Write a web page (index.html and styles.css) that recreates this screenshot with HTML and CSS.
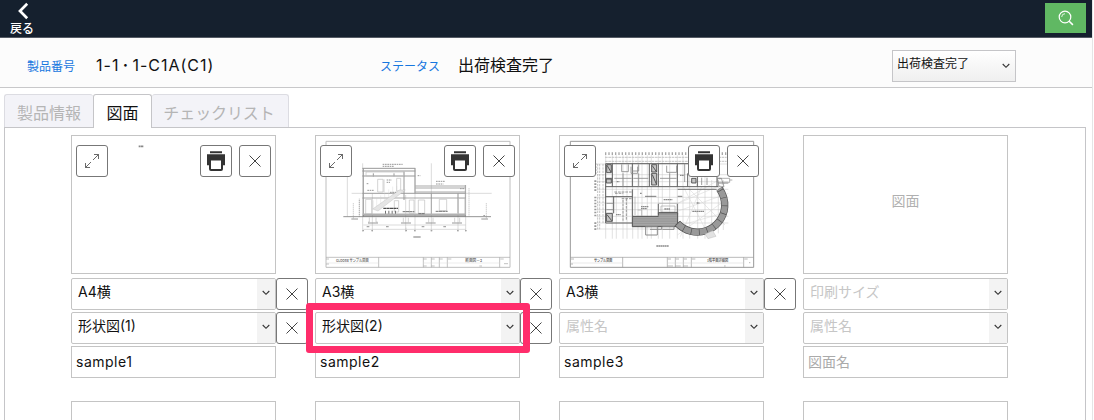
FILE: index.html
```html
<!DOCTYPE html>
<html lang="ja">
<head>
<meta charset="utf-8">
<title>図面</title>
<link rel="stylesheet" href="styles.css">
</head>
<body>
<svg class="defs" width="0" height="0" aria-hidden="true">
  <symbol id="expand" viewBox="0 0 32 32"><path d="M9.500 22.500l5.500-5.500M17 15l5.500-5.500M18 9.500h4.500v4.500M9.500 18v4.500h4.500" fill="none" stroke="#444" stroke-width=".8"/></symbol>
  <symbol id="close" viewBox="0 0 32 32"><path d="M10.500 10.500l11 11M21.500 10.500l-11 11" fill="none" stroke="#444" stroke-width="1"/></symbol>
  <symbol id="print" viewBox="0 0 32 32"><path d="M10 6.300h12v2H10zM7 9.200h18v11h-2V15H9v5.200H7z" fill="#333"/><path d="M10 14.500h12v9.500q0 1-1 1H11q-1 0-1-1z" fill="#fff" stroke="#333" stroke-width="2"/></symbol>
  <symbol id="chev" viewBox="0 0 8 6"><path d="M.7 1L4 4.300 7.300 1" fill="none" stroke="#333" stroke-width="1.100"/></symbol>
</svg>
<div class="page">
  <header class="topbar">
    <a class="back"><svg width="14" height="18" viewBox="0 0 14 18"><path d="M11.200 1.800L4 9l7.200 7.200" fill="none" stroke="#fff" stroke-width="2.700"/></svg><span>戻る</span></a>
    <button class="search"><svg width="16" height="16" viewBox="0 0 16 16" fill="none" stroke="#fff"><circle cx="7" cy="7" r="5.800" stroke-width="1.200"/><path d="M3.700 7A3.400 3.400 0 0 1 7 3.700" stroke-width=".8"/><path d="M11.200 11.200l3.700 3.700" stroke-width="1.500"/></svg></button>
  </header>
  <section class="info">
    <span class="label">製品番号</span><span class="value code">1-1<span class="dot">·</span>1-C1A(C1)</span>
    <span class="label status">ステータス</span><span class="value">出荷検査完了</span>
    <div class="status-select"><span>出荷検査完了</span><svg class="chev"><use href="#chev"/></svg></div>
  </section>
  <nav class="tabs"><a class="tab t1">製品情報</a><a class="tab active">図面</a><a class="tab t3">チェックリスト</a></nav>
  <main class="panel">
    <article class="card">
      <div class="thumb">
        <svg class="drawing" viewBox="18 18 609 411"><path d="M218 49h15" stroke="#888" stroke-width="5" stroke-dasharray="6 1"/></svg>
        <div class="tools"><button class="btn"><svg><use href="#expand"/></svg></button><button class="btn push"><svg><use href="#print"/></svg></button><button class="btn"><svg><use href="#close"/></svg></button></div>
      </div>
      <div class="row"><div class="select"><span>A4横</span><i><svg class="chev"><use href="#chev"/></svg></i></div><button class="btn"><svg><use href="#close"/></svg></button></div>
      <div class="row"><div class="select"><span>形状図(1)</span><i><svg class="chev"><use href="#chev"/></svg></i></div><button class="btn"><svg><use href="#close"/></svg></button></div>
      <div class="input">sample1</div>
    </article>
    <article class="card">
      <div class="thumb">
        <svg class="drawing section-view" viewBox="18 18 609 411" fill="none">
          <path d="M48 34H600V412H48z" stroke="#aaa" stroke-width="3"/>
          <path d="M48 382H600M206 382v30M340 382v30M364 382v30M388 382v30M412 382v30M569 382v30" stroke="#888" stroke-width="2"/>
          <path d="M48 399H206M340 399H569" stroke="#ccc" stroke-width="1.500"/>
          <path d="M112 125v134M125 190H545M148 205v55M158 100v205M187 190v115M287 195v110M315 115v190M364 100v205M444 190v115M467 165v140M160 285H467M160 298H467M288 293v10" stroke="#aaa" stroke-width="1.700"/>
          <path d="M130 220v48M529 220v48M148 210v50M477 175v85" stroke="#777" stroke-width="2" stroke-dasharray="3 3"/>
          <path d="M157 115H316M157 123H316M157 138H316M160 115v145M315 115v75M282 125v85M190 130v10M252 130v9" stroke="#777" stroke-width="3"/>
          <path d="M157 190H467M157 204H467M316 168H467M316 174H467M316 186H467M466 165v95M364 190v65M444 190v60" stroke="#777" stroke-width="2.500"/>
          <path d="M168 126H282v12H168zM203 148h16v38h-16zM222 148v38M260 145h12v38h-12zM167 208h18v44h-18zM253 212h13v34h-13zM325 210h19v40h-19zM298 210v40h14v-40zM388 208h22v34h-22zM445 205h20v48h-20z" stroke="#aaa" stroke-width="2"/>
          <path d="M188 237L268 180h18L204 243z" fill="#ddd" stroke="#999"/>
          <path d="M190 236v-25M200 230v-25M212 221v-25M224 212v-25M236 203v-25M248 195v-25M260 188v-20" stroke="#bbb"/>
          <path d="M158 253H467" stroke="#999" stroke-width="5"/>
          <path d="M158 258H467" stroke="#444" stroke-width="3"/>
          <path d="M100 260H543" stroke="#555" stroke-width="2.500"/>
          <path d="M220 235h44" stroke="#111" stroke-width="4" stroke-dasharray="9 1"/>
          <path d="M225 247h37" stroke="#444" stroke-width="9" stroke-dasharray="3 7"/>
          <path d="M278 245h35M325 251h20M377 244h36" stroke="#444" stroke-width="3" stroke-dasharray="9 1"/>
          <path d="M230 150h15M230 157h10M170 161h6M172 181h20M218 103h60M218 109h35M378 154h28M378 162h22M450 176h14M323 137h8M240 187h18" stroke="#777" stroke-width="3" stroke-dasharray="5 2"/>
          <path d="M178 262v14h-4M198 262v14h5M280 263v14M295 263v14M356 263v14M369 263v14M434 263v14M449 263v14" stroke="#aaa" stroke-width="2"/>
          <path d="M174 279h30M273 279h30M347 279h30M426 279h30M124 267h20M514 267h20" stroke="#777" stroke-width="3"/>
          <path d="M157 302h5M184 302h5M286 302h5M312 302h5M362 302h5M441 302h5M465 302h5M310 321h22M170 290h8M228 290h8M335 290h8M400 290h8M520 257h5" stroke="#888" stroke-width="4"/>
          <path d="M340 387h10M364 387h10M388 387h10M414 387h10M340 408h10M364 408h10M508 408h8M48 387h9M48 402h9M571 387h10M582 401h12" stroke="#888" stroke-width="2"/>
          <g class="caption" fill="#222"><text x="78" y="396" textLength="98" lengthAdjust="spacingAndGlyphs">GLOOBE サンプル図面</text><text x="466" y="397" textLength="50" lengthAdjust="spacingAndGlyphs">断面図－2</text></g>
        </svg>
        <div class="tools"><button class="btn"><svg><use href="#expand"/></svg></button><button class="btn push"><svg><use href="#print"/></svg></button><button class="btn"><svg><use href="#close"/></svg></button></div>
      </div>
      <div class="row"><div class="select"><span>A3横</span><i><svg class="chev"><use href="#chev"/></svg></i></div><button class="btn"><svg><use href="#close"/></svg></button></div>
      <div class="row"><div class="select"><span>形状図(2)</span><i><svg class="chev"><use href="#chev"/></svg></i></div><button class="btn"><svg><use href="#close"/></svg></button><div class="highlight"></div></div>
      <div class="input">sample2</div>
    </article>
    <article class="card">
      <div class="thumb">
        <svg class="drawing plan-view" viewBox="15 18 609 411" fill="none">
          <path d="M46 34H596V412H46z" stroke="#888" stroke-width="3"/>
          <path d="M46 382H596M203 382v30M337 382v30M361 382v30M385 382v30M409 382v30M566 382v30" stroke="#888" stroke-width="2"/>
          <path d="M46 399H203M337 399H566" stroke="#ccc" stroke-width="1.500"/>
          <path d="M150 71H515" stroke="#999" stroke-width="8" stroke-dasharray="4 6"/>
          <path d="M150 82H515M150 94H515" stroke="#999" stroke-width="2" stroke-dasharray="8 2"/>
          <path d="M152 76v250M172 76v250M184 76v250M204 76v250M216 76v250M233 76v250M249 76v250M261 76v250M277 76v250M289 76v250M310 76v250M322 76v250M344 76v250M367 76v250M384 76v250M404 76v250M428 76v250M450 76v250M470 150v170M490 150v160M505 150v150M125 102H520M125 134H520M125 155H520M125 178H520M125 202H520M125 219H520M125 239H520M125 259H520M125 279H520M125 297H450" stroke="#bbb" stroke-width="1.500"/>
          <path d="M121 100v35M121 151v35M121 200v62M121 277v26" stroke="#888" stroke-width="6" stroke-dasharray="5 4"/>
          <path d="M128 102v196M134 102v196M144 102v178" stroke="#999" stroke-width="2" stroke-dasharray="7 3"/>
          <path d="M367 221L500 145M367 221L510 160M367 315L505 215M376 320L440 170M385 170L460 315M400 175L510 285M350 250L520 190M380 285L520 245" stroke="#ccc" stroke-width="1.500"/>
          <path d="M152 101H400M152 170H490M152 101v178h80M172 101v69M232 101v69M283 101v69M310 101v69M367 101v69M152 145h20M152 200h80M176 200v50M232 178v80M398 130v40M427 140v30M486 140v30" stroke="#444" stroke-width="3"/>
          <path d="M200 103v22h20v-22M228 110v20h20v-20M251 103v20h-20M335 107v20h30v-20M178 145H230M235 145H280M315 145H365M204 130v40M251 130v40M344 130v40M389 101v55M456 143v22M440 143v22M154 220h21M154 239h21" stroke="#777" stroke-width="2.500"/>
          <path d="M155 104h14v24h-14zM290 104h15v22h-15zM290 130h15v35h-15zM154 147h15v12h-15zM154 250h18v24h-18zM410 145h13v14h-13z" fill="#bbb" stroke="#222" stroke-width="2.500"/>
          <path d="M156 106l12 20M292 107l12 18M292 134l12 28M156 254l14 18" stroke="#222" stroke-width="2.500"/>
          <path d="M178 186H230M200 206H230M204 210v62M180 190h25M214 206v64" stroke="#555" stroke-width="2" stroke-dasharray="8 3"/>
          <path d="M310 220h58v34h-58zM318 228h42v18h-42zM240 200v55M248 240h12v17" stroke="#999" stroke-width="2"/>
          <path d="M232 259H310V248H368V290H232z" fill="#888" stroke="#333" stroke-width="3"/>
          <path d="M310 250v-28M367 250v-28M368 178H485M270 199h34M368 199h14" stroke="#444" stroke-width="2.500"/>
          <path d="M310 257h55M235 263h130M235 270h130M235 277h130M235 284h130" stroke="#aaa" stroke-width="1.500"/>
          <path d="M367 280A82 82 0 0 0 509 231A84 84 0 0 0 493 176" stroke="#333" stroke-width="22"/>
          <path d="M367 280A82 82 0 0 0 509 231A84 84 0 0 0 493 176" stroke="#888" stroke-width="18"/>
          <path d="M367 280A82 82 0 0 0 509 231A84 84 0 0 0 493 176" stroke="#333" stroke-width="18" stroke-dasharray="2 22"/>
          <path d="M272 290h35v25h-35zM285 298h35v-8M322 290h35v8h-35" stroke="#777" stroke-width="3"/>
          <path d="M450 312l23-10 10 17-24 7z" fill="#ddd" stroke="#999"/>
          <path d="M488 145h36v12h-36M490 160h30M524 150h8" stroke="#777" stroke-width="2"/>
          <path d="M487 145h12l8 25h-15z" stroke="#666" stroke-width="2"/>
          <path d="M183 254h14M255 190h6M258 230h22M258 236h18M326 209h26M328 237h18M412 244h36M425 219h8M185 155h8M375 136h12M304 348h38" stroke="#777" stroke-width="4" stroke-dasharray="5 1"/>
          <path d="M339 387h9M363 387h9M387 387h9M411 387h10M338 408h16M361 408h16M385 408h14M507 408h5M48 387h9M46 402h8M568 387h10M582 398h4" stroke="#888" stroke-width="2"/>
          <g class="caption" fill="#222"><text x="117" y="396" textLength="55" lengthAdjust="spacingAndGlyphs">サンプル図面</text><text x="456" y="397" textLength="64" lengthAdjust="spacingAndGlyphs">1階平面詳細図</text></g>
        </svg>
        <div class="tools"><button class="btn"><svg><use href="#expand"/></svg></button><button class="btn push"><svg><use href="#print"/></svg></button><button class="btn"><svg><use href="#close"/></svg></button></div>
      </div>
      <div class="row"><div class="select"><span>A3横</span><i><svg class="chev"><use href="#chev"/></svg></i></div><button class="btn"><svg><use href="#close"/></svg></button></div>
      <div class="row"><div class="select empty"><span>属性名</span><i><svg class="chev"><use href="#chev"/></svg></i></div></div>
      <div class="input">sample3</div>
    </article>
    <article class="card">
      <div class="thumb blank">図面</div>
      <div class="row"><div class="select empty"><span>印刷サイズ</span><i><svg class="chev"><use href="#chev"/></svg></i></div></div>
      <div class="row"><div class="select empty"><span>属性名</span><i><svg class="chev"><use href="#chev"/></svg></i></div></div>
      <div class="input placeholder">図面名</div>
    </article>
    <article class="card"><div class="thumb"></div></article>
    <article class="card"><div class="thumb"></div></article>
    <article class="card"><div class="thumb"></div></article>
    <article class="card"><div class="thumb"></div></article>
  </main>
</div>
</body>
</html>
```

FILE: styles.css
```css
* { box-sizing: border-box; }
body { margin: 0; height: 420px; overflow: hidden; background: #fff; color: #111; font-family: Inter, "Noto Sans CJK JP", sans-serif; }
svg { display: block; }
.defs { position: absolute; }
button { padding: 0; font: inherit; }
.page { width: 1093px; height: 420px; overflow: hidden; border-right: 1px solid #e5e5e5; }
.topbar { height: 38px; background: #15202e; border-bottom: 1px solid #555b65; display: flex; justify-content: space-between; align-items: flex-start; padding: 3px 6px 0 10px; }
.back { display: flex; flex-direction: column; align-items: center; width: 24px; color: #fff; font-size: 12px; font-weight: 500; line-height: 18px; white-space: nowrap; }
.back svg { margin-left: 2px; margin-top: -1px; }
.search { width: 41px; height: 30px; border: 0; background: #60b863; display: flex; align-items: center; justify-content: center; }
.info { height: 50px; background: #fcfcfc; border-bottom: 1px solid #c8c8ca; display: flex; align-items: center; padding: 0 76px 0 27px; white-space: nowrap; }
.label { color: #1777df; font-size: 12px; line-height: 18px; margin-top: 9px; }
.value { font-size: 16px; line-height: 24px; margin: 5px 0 0 18px; }
.code { width: 283px; margin-left: 21px; letter-spacing: 1px; }
.dot { display: inline-block; width: 13px; text-align: center; font-weight: 700; }
.status { margin-left: 1px; }
.status-select { margin: 6px 0 0 auto; width: 124px; height: 32px; border: 1px solid #c5c5c8; background: linear-gradient(#fff, #efefef); display: flex; justify-content: space-between; padding: 2px 5px 0 4px; font-size: 12px; line-height: 22px; }
.chev { width: 8px; height: 6px; }
.status-select .chev { margin-top: 10px; }
.tabs { height: 39px; padding: 6px 0 0 4px; display: flex; }
.tab { height: 33px; border: 1px solid #dcdce2; border-bottom: 0; background: #f3f3f8; color: #b5b5b5; font-size: 16px; line-height: 36px; text-align: center; border-radius: 3px 3px 0 0; }
.t1 { width: 89px; border-right: 0; }
.t3 { width: 137px; border-left: 0; letter-spacing: -.1px; padding-right: 2px; }
.tab.active { width: 59px; height: 34px; background: #fff; border-color: #c5c5c8; color: #111; position: relative; }
.panel { width: 1082px; margin-left: 4px; height: 300px; border: 1px solid #c5c5c8; border-bottom: 0; padding: 7px 0 0 66px; display: grid; grid-template-columns: repeat(4, 244px); grid-auto-rows: 243px; row-gap: 23px; }
.card { display: flex; flex-direction: column; gap: 2px; }
.thumb { width: 205px; height: 139px; border: 1px solid #c4c4c4; display: grid; margin-bottom: 2px; }
.thumb > * { grid-area: 1 / 1; }
.drawing { width: 203px; height: 137px; }
.section-view { opacity: .75; }
.plan-view { opacity: .85; }
.caption { font: 500 12px "Noto Sans CJK JP", sans-serif; }
.tools { display: flex; gap: 7px; align-items: flex-start; padding: 9px 4px; z-index: 1; }
.push { margin-left: auto; }
.btn { width: 32px; height: 32px; flex: none; border: 1px solid #777; border-radius: 3px; background: #fff; }
.btn svg { width: 32px; height: 32px; margin: -1px; }
.row { display: flex; height: 32px; position: relative; }
.select { width: 205px; height: 32px; border: 1px solid #c4c4c4; border-radius: 2px; display: flex; justify-content: space-between; padding-left: 6px; font-size: 14px; line-height: 25px; }
.select i { width: 18px; background: #f3f3f3; display: flex; justify-content: center; padding-top: 11px; }
.empty { color: #c6c6c6; }
.input { width: 205px; height: 32px; border: 1px solid #c4c4c4; padding-left: 4px; font-size: 14px; line-height: 29px; letter-spacing: .5px; }
.placeholder { color: #aaa; letter-spacing: 0; }
.blank { place-items: center; color: #b0b0b0; font-size: 14px; padding-bottom: 9px; }
.highlight { position: absolute; left: -9px; top: -9px; width: 224px; height: 50px; border: 7px solid #ff2d6b; border-radius: 3px; }
```
